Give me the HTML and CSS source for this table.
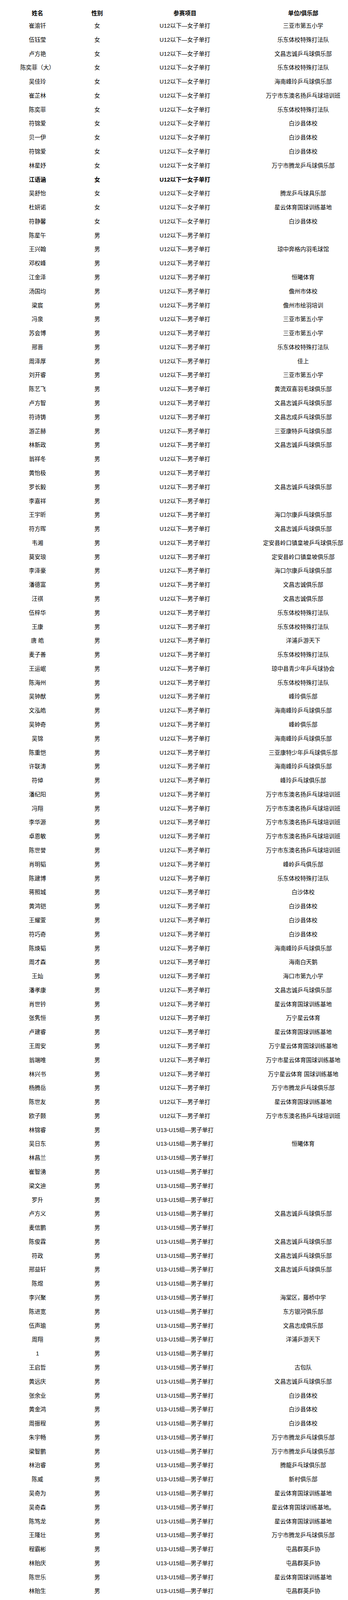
FILE: index.html
```html
<!DOCTYPE html>
<html lang="zh-CN">
<head>
<meta charset="utf-8">
<title>报名名单</title>
<link rel="stylesheet" href="styles.css">
</head>
<body>
<table class="roster">
  <colgroup>
    <col class="c-name">
    <col class="c-sex">
    <col class="c-event">
    <col class="c-club">
  </colgroup>
  <thead>
    <tr><th>姓名</th><th>性别</th><th class="event">参赛项目</th><th>单位/俱乐部</th></tr>
  </thead>
  <tbody>
    <tr><td>崔渝钎</td><td>女</td><td class="event">U12以下—女子单打</td><td>三亚市第五小学</td></tr>
    <tr><td>伍钰莹</td><td>女</td><td class="event">U12以下—女子单打</td><td>乐东体校特殊打法队</td></tr>
    <tr><td>卢方艳</td><td>女</td><td class="event">U12以下—女子单打</td><td>文昌志诚乒乓球俱乐部</td></tr>
    <tr><td>陈奕菲（大）</td><td>女</td><td class="event">U12以下—女子单打</td><td>乐东体校特殊打法队</td></tr>
    <tr><td>吴佳玲</td><td>女</td><td class="event">U12以下—女子单打</td><td>海南峰玲乒乓球俱乐部</td></tr>
    <tr><td>崔芷林</td><td>女</td><td class="event">U12以下—女子单打</td><td>万宁市东澳名扬乒乓球培训班</td></tr>
    <tr><td>陈奕菲</td><td>女</td><td class="event">U12以下—女子单打</td><td>乐东体校特殊打法队</td></tr>
    <tr><td>符锦爱</td><td>女</td><td class="event">U12以下—女子单打</td><td>白沙县体校</td></tr>
    <tr><td>贝一伊</td><td>女</td><td class="event">U12以下—女子单打</td><td>白沙县体校</td></tr>
    <tr><td>符锦爱</td><td>女</td><td class="event">U12以下—女子单打</td><td>白沙县体校</td></tr>
    <tr><td>林星妤</td><td>女</td><td class="event">U12以下一女子单打</td><td>万宁市腾龙乒乓球俱乐部</td></tr>
    <tr class="strong"><td>江语涵</td><td>女</td><td class="event">U12以下一女子单打</td><td></td></tr>
    <tr><td>吴舒怡</td><td>女</td><td class="event">U12以下—女子单打</td><td>腾龙乒乓球具乐部</td></tr>
    <tr><td>杜妍诺</td><td>女</td><td class="event">U12以下—女子单打</td><td>星云体育国球训练基地</td></tr>
    <tr><td>符静馨</td><td>女</td><td class="event">U12以下—女子单打</td><td>白沙县体校</td></tr>
    <tr><td>陈星午</td><td>男</td><td class="event">U12以下—男子单打</td><td></td></tr>
    <tr><td>王兴翰</td><td>男</td><td class="event">U12以下—男子单打</td><td>琼中奔格内羽毛球馆</td></tr>
    <tr><td>邓权峰</td><td>男</td><td class="event">U12以下—男子单打</td><td></td></tr>
    <tr><td>江金泽</td><td>男</td><td class="event">U12以下—男子单打</td><td>恒曦体育</td></tr>
    <tr><td>汤国均</td><td>男</td><td class="event">U12以下—男子单打</td><td>儋州市体校</td></tr>
    <tr><td>梁宸</td><td>男</td><td class="event">U12以下—男子单打</td><td>儋州市绘羽培训</td></tr>
    <tr><td>冯泉</td><td>男</td><td class="event">U12以下—男子单打</td><td>三亚市第五小学</td></tr>
    <tr><td>苏会博</td><td>男</td><td class="event">U12以下—男子单打</td><td>三亚市第五小学</td></tr>
    <tr><td>邢晋</td><td>男</td><td class="event">U12以下—男子单打</td><td>乐东体校特殊打法队</td></tr>
    <tr><td>周泽厚</td><td>男</td><td class="event">U12以下—男子单打</td><td>佳上</td></tr>
    <tr><td>刘开睿</td><td>男</td><td class="event">U12以下—男子单打</td><td>三亚市第五小学</td></tr>
    <tr><td>陈艺飞</td><td>男</td><td class="event">U12以下—男子单打</td><td>黄流双喜羽毛球俱乐部</td></tr>
    <tr><td>卢方智</td><td>男</td><td class="event">U12以下—男子单打</td><td>文昌志诚乒乓球俱乐部</td></tr>
    <tr><td>符诗铸</td><td>男</td><td class="event">U12以下—男子单打</td><td>文昌志成乒乓球俱乐部</td></tr>
    <tr><td>游芷赫</td><td>男</td><td class="event">U12以下—男子单打</td><td>三亚康特乒乓球俱乐部</td></tr>
    <tr><td>林新政</td><td>男</td><td class="event">U12以下—男子单打</td><td>文昌志诚乒乓球俱乐部</td></tr>
    <tr><td>翁祥冬</td><td>男</td><td class="event">U12以下—男子单打</td><td></td></tr>
    <tr><td>黄怡极</td><td>男</td><td class="event">U12以下—男子单打</td><td></td></tr>
    <tr><td>罗长毅</td><td>男</td><td class="event">U12以下—男子单打</td><td>文昌志诚乒乓球俱乐部</td></tr>
    <tr><td>李嘉祥</td><td>男</td><td class="event">U12以下—男子单打</td><td></td></tr>
    <tr><td>王宇昕</td><td>男</td><td class="event">U12以下—男子单打</td><td>海口尔康乒乓球俱乐部</td></tr>
    <tr><td>符方晖</td><td>男</td><td class="event">U12以下—男子单打</td><td>文昌志诚乒乓球俱乐部</td></tr>
    <tr><td>韦湘</td><td>男</td><td class="event">U12以下—男子单打</td><td>定安县岭口镇皇坡乒乓球俱乐部</td></tr>
    <tr><td>莫安琅</td><td>男</td><td class="event">U12以下—男子单打</td><td>定安县岭口镇皇坡俱乐部</td></tr>
    <tr><td>李泽豪</td><td>男</td><td class="event">U12以下—男子单打</td><td>海口尔康乒乓球俱乐部</td></tr>
    <tr><td>潘德富</td><td>男</td><td class="event">U12以下—男子单打</td><td>文昌志诚俱乐部</td></tr>
    <tr><td>汪祺</td><td>男</td><td class="event">U12以下—男子单打</td><td>文昌志诚俱乐部</td></tr>
    <tr><td>伍梓华</td><td>男</td><td class="event">U12以下—男子单打</td><td>乐东体校特殊打法队</td></tr>
    <tr><td>王康</td><td>男</td><td class="event">U12以下—男子单打</td><td>乐东体校特殊打法队</td></tr>
    <tr><td>唐 皓</td><td>男</td><td class="event">U12以下—男子单打</td><td>洋浦乒游天下</td></tr>
    <tr><td>麦子善</td><td>男</td><td class="event">U12以下—男子单打</td><td>乐东体校特殊打法队</td></tr>
    <tr><td>王运岷</td><td>男</td><td class="event">U12以下—男子单打</td><td>琼中县青少年乒乓球协会</td></tr>
    <tr><td>陈海州</td><td>男</td><td class="event">U12以下—男子单打</td><td>乐东体校特殊打法队</td></tr>
    <tr><td>吴钟猷</td><td>男</td><td class="event">U12以下—男子单打</td><td>峰玲俱乐部</td></tr>
    <tr><td>文泓皓</td><td>男</td><td class="event">U12以下—男子单打</td><td>海南峰玲乒乓球俱乐部</td></tr>
    <tr><td>吴钟奇</td><td>男</td><td class="event">U12以下—男子单打</td><td>峰岭俱乐部</td></tr>
    <tr><td>吴锦</td><td>男</td><td class="event">U12以下—男子单打</td><td>海南峰玲乒乓球俱乐部</td></tr>
    <tr><td>陈重恺</td><td>男</td><td class="event">U12以下—男子单打</td><td>三亚康特少年乒乓球俱乐部</td></tr>
    <tr><td>许联涛</td><td>男</td><td class="event">U12以下—男子单打</td><td>海南峰玲乒乓球俱乐部</td></tr>
    <tr><td>符倬</td><td>男</td><td class="event">U12以下—男子单打</td><td>峰玲乒乓球俱乐部</td></tr>
    <tr><td>潘纪阳</td><td>男</td><td class="event">U12以下—男子单打</td><td>万宁市东澳名扬乒乓球培训班</td></tr>
    <tr><td>冯翔</td><td>男</td><td class="event">U12以下—男子单打</td><td>万宁市东澳名扬乒乓球培训班</td></tr>
    <tr><td>李华源</td><td>男</td><td class="event">U12以下—男子单打</td><td>万宁市东澳名扬乒乓球培训班</td></tr>
    <tr><td>卓恩敏</td><td>男</td><td class="event">U12以下—男子单打</td><td>万宁市东澳名扬乒乓球培训班</td></tr>
    <tr><td>陈世誉</td><td>男</td><td class="event">U12以下—男子单打</td><td>万宁市东澳名扬乒乓球培训班</td></tr>
    <tr><td>肖明韬</td><td>男</td><td class="event">U12以下—男子单打</td><td>峰岭乒乓俱乐部</td></tr>
    <tr><td>陈建博</td><td>男</td><td class="event">U12以下—男子单打</td><td>乐东体校特殊打法队</td></tr>
    <tr><td>蒋照城</td><td>男</td><td class="event">U12以下—男子单打</td><td>白沙体校</td></tr>
    <tr><td>黄鸿铠</td><td>男</td><td class="event">U12以下—男子单打</td><td>白沙县体校</td></tr>
    <tr><td>王耀萱</td><td>男</td><td class="event">U12以下—男子单打</td><td>白沙县体校</td></tr>
    <tr><td>符巧奇</td><td>男</td><td class="event">U12以下—男子单打</td><td>白沙县体校</td></tr>
    <tr><td>陈焕韬</td><td>男</td><td class="event">U12以下—男子单打</td><td>海南峰玲乒乓球俱乐部</td></tr>
    <tr><td>周才森</td><td>男</td><td class="event">U12以下—男子单打</td><td>海南白天鹅</td></tr>
    <tr><td>王灿</td><td>男</td><td class="event">U12以下—男子单打</td><td>海口市第九小学</td></tr>
    <tr><td>潘孝康</td><td>男</td><td class="event">U12以下—男子单打</td><td>文昌志诚乒乓球俱乐部</td></tr>
    <tr><td>肖世钤</td><td>男</td><td class="event">U12以下—男子单打</td><td>星云体育国球训练基地</td></tr>
    <tr><td>张隽恒</td><td>男</td><td class="event">U12以下—男子单打</td><td>万宁星云体育</td></tr>
    <tr><td>卢建睿</td><td>男</td><td class="event">U12以下—男子单打</td><td>星云体育国球训练基地</td></tr>
    <tr><td>王周安</td><td>男</td><td class="event">U12以下—男子单打</td><td>万宁星云体育国球训练基地</td></tr>
    <tr><td>翁端唯</td><td>男</td><td class="event">U12以下—男子单打</td><td>万宁市星云体育国球训练基地</td></tr>
    <tr><td>林兴书</td><td>男</td><td class="event">U12以下—男子单打</td><td>万宁星云体育 国球训练基地</td></tr>
    <tr><td>杨腾岳</td><td>男</td><td class="event">U12以下—男子单打</td><td>万宁市腾龙乒乓球俱乐部</td></tr>
    <tr><td>陈世友</td><td>男</td><td class="event">U12以下—男子单打</td><td>星云体育国球训练基地</td></tr>
    <tr><td>欧子颢</td><td>男</td><td class="event">U12以下—男子单打</td><td>万宁市东澳名扬乒乓球培训班</td></tr>
    <tr><td>林锦睿</td><td>男</td><td class="event">U13-U15组—男子单打</td><td></td></tr>
    <tr><td>吴日东</td><td>男</td><td class="event">U13-U15组—男子单打</td><td>恒曦体育</td></tr>
    <tr><td>林昌兰</td><td>男</td><td class="event">U13-U15组—男子单打</td><td></td></tr>
    <tr><td>崔智湧</td><td>男</td><td class="event">U13-U15组—男子单打</td><td></td></tr>
    <tr><td>梁文迪</td><td>男</td><td class="event">U13-U15组—男子单打</td><td></td></tr>
    <tr><td>罗升</td><td>男</td><td class="event">U13-U15组—男子单打</td><td></td></tr>
    <tr><td>卢方义</td><td>男</td><td class="event">U13-U15组—男子单打</td><td>文昌志诚乒乓球俱乐部</td></tr>
    <tr><td>麦信鹏</td><td>男</td><td class="event">U13-U15组—男子单打</td><td></td></tr>
    <tr><td>陈俊霖</td><td>男</td><td class="event">U13-U15组—男子单打</td><td>文昌志诚乒乓球俱乐部</td></tr>
    <tr><td>符政</td><td>男</td><td class="event">U13-U15组—男子单打</td><td>文昌志诚乒乓球俱乐部</td></tr>
    <tr><td>邢益轩</td><td>男</td><td class="event">U13-U15组—男子单打</td><td>文昌志诚乒乓球俱乐部</td></tr>
    <tr><td>陈煜</td><td>男</td><td class="event">U13-U15组—男子单打</td><td></td></tr>
    <tr><td>李兴聚</td><td>男</td><td class="event">U13-U15组—男子单打</td><td>海棠区，藤桥中学</td></tr>
    <tr><td>陈进宽</td><td>男</td><td class="event">U13-U15组—男子单打</td><td>东方银河俱乐部</td></tr>
    <tr><td>伍声瑜</td><td>男</td><td class="event">U13-U15组—男子单打</td><td>文昌志成俱乐部</td></tr>
    <tr><td>周翔</td><td>男</td><td class="event">U13-U15组—男子单打</td><td>洋浦乒游天下</td></tr>
    <tr><td>1</td><td>男</td><td class="event">U13-U15组—男子单打</td><td></td></tr>
    <tr><td>王启哲</td><td>男</td><td class="event">U13-U15组—男子单打</td><td>古包队</td></tr>
    <tr><td>黄远庆</td><td>男</td><td class="event">U13-U15组—男子单打</td><td>文昌志诚乒乓球俱乐部</td></tr>
    <tr><td>张余业</td><td>男</td><td class="event">U13-U15组—男子单打</td><td>白沙县体校</td></tr>
    <tr><td>黄金鸿</td><td>男</td><td class="event">U13-U15组—男子单打</td><td>白沙县体校</td></tr>
    <tr><td>周振程</td><td>男</td><td class="event">U13-U15组—男子单打</td><td>白沙县体校</td></tr>
    <tr><td>朱宇畅</td><td>男</td><td class="event">U13-U15组—男子单打</td><td>万宁市腾龙乒乓球俱乐部</td></tr>
    <tr><td>梁智鹏</td><td>男</td><td class="event">U13-U15组—男子单打</td><td>万宁市腾龙乒乓球俱乐部</td></tr>
    <tr><td>林治睿</td><td>男</td><td class="event">U13-U15组—男子单打</td><td>腾龍乒乓球俱乐部</td></tr>
    <tr><td>陈威</td><td>男</td><td class="event">U13-U15组—男子单打</td><td>新村俱乐部</td></tr>
    <tr><td>吴奇为</td><td>男</td><td class="event">U13-U15组—男子单打</td><td>星云体育国球训练基地</td></tr>
    <tr><td>吴奇森</td><td>男</td><td class="event">U13-U15组—男子单打</td><td>星云体育国球训练基地。</td></tr>
    <tr><td>陈笃龙</td><td>男</td><td class="event">U13-U15组—男子单打</td><td>星云体育国球训练基地</td></tr>
    <tr><td>王隆壮</td><td>男</td><td class="event">U13-U15组—男子单打</td><td>万宁市腾龙乒乓球俱乐部</td></tr>
    <tr><td>程霸彬</td><td>男</td><td class="event">U13-U15组—男子单打</td><td>屯昌群英乒协</td></tr>
    <tr><td>林贻庆</td><td>男</td><td class="event">U13-U15组—男子单打</td><td>屯昌群英乒协</td></tr>
    <tr><td>陈世乐</td><td>男</td><td class="event">U13-U15组—男子单打</td><td>星云体育国球训练基地</td></tr>
    <tr><td>林贻生</td><td>男</td><td class="event">U13-U15组—男子单打</td><td>屯昌群英乒协</td></tr>
  </tbody>
</table>
</body>
</html>
```

FILE: styles.css
```css
:root {
  --u: calc(100vw / 892);
  --v: calc(100vh / 5889);
}

html, body {
  margin: 0;
  padding: 0;
  background: #ffffff;
}

body {
  font-family: "Liberation Sans", "Noto Sans CJK SC", sans-serif;
  font-size: calc(14.7 * var(--u));
  color: #000000;
}

.roster {
  width: 100%;
  table-layout: fixed;
  border-collapse: collapse;
  margin-top: calc(29.7 * var(--v));
}

.c-name { width: calc(192 * var(--u)); }
.c-sex { width: calc(114 * var(--u)); }
.c-event { width: calc(356 * var(--u)); }
.c-club { width: calc(230 * var(--u)); }

.roster th,
.roster td {
  padding: 0;
  text-align: center;
  vertical-align: middle;
  white-space: nowrap;
  line-height: 1.2;
}

.roster th {
  height: calc(40.6 * var(--v));
  font-weight: bold;
}

.roster td {
  height: calc(51.45 * var(--v));
  font-weight: normal;
}

.roster .event {
  padding-right: calc(20 * var(--u));
}

.roster .strong td {
  font-weight: bold;
}
```
